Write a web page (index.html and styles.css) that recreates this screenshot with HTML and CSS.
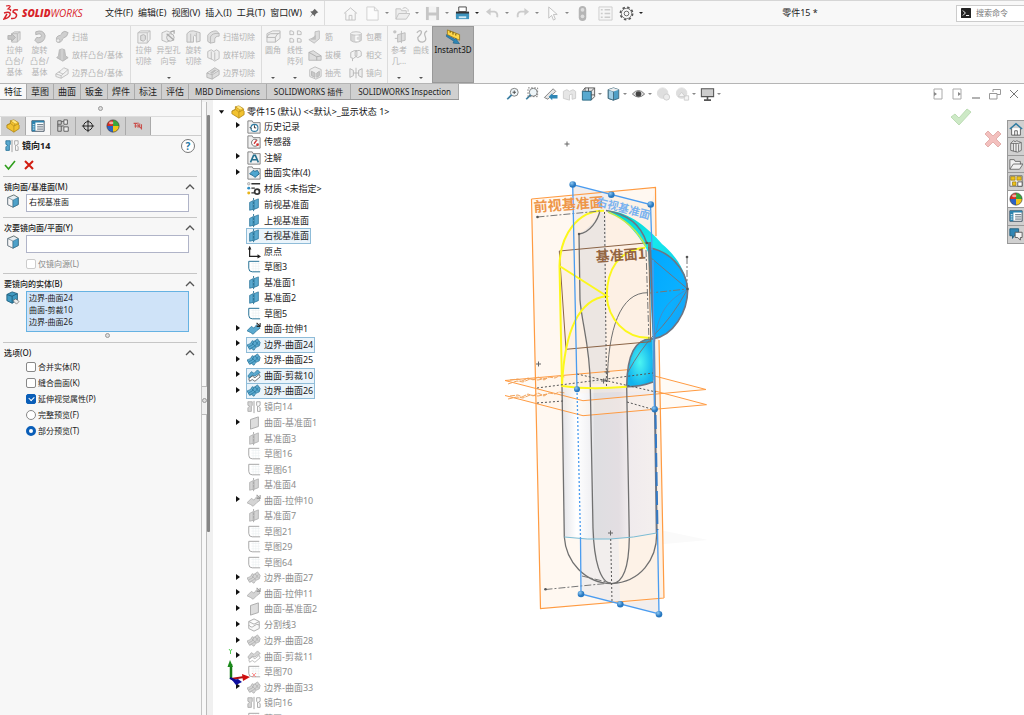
FILE: index.html
```html
<!DOCTYPE html>
<html lang="zh-CN">
<head>
<meta charset="utf-8">
<title>SOLIDWORKS - 零件15</title>
<link rel="stylesheet" href="styles.css">
</head>
<body>
<svg class="defs" aria-hidden="true">
  <defs>
    <linearGradient id="gBody" x1="0" x2="1" y1="0" y2="0"><stop offset="0" stop-color="#e4e4e8"/><stop offset=".15" stop-color="#fff"/><stop offset=".3" stop-color="#f1f1f4"/><stop offset=".34" stop-color="#dedee1"/><stop offset=".6" stop-color="#e3dee2"/><stop offset=".7" stop-color="#f0ebed"/><stop offset="1" stop-color="#f4efee"/></linearGradient>
    <linearGradient id="gBlue" x1="0" x2="1" y1="0" y2="1"><stop offset="0" stop-color="#00a8ff"/><stop offset=".6" stop-color="#0ab0ff"/><stop offset="1" stop-color="#1e9cf0"/></linearGradient>
    <linearGradient id="gTeal" x1="0" x2="1" y1="0" y2="1"><stop offset="0" stop-color="#00cfc8"/><stop offset=".5" stop-color="#16e8ec"/><stop offset="1" stop-color="#08c4e8"/></linearGradient>
    <radialGradient id="gFin"><stop offset="0" stop-color="#4cf5f2"/><stop offset="1" stop-color="#12b4ee"/></radialGradient>
    <radialGradient id="gDot" cx=".35" cy=".3"><stop offset="0" stop-color="#8cc8f4"/><stop offset="1" stop-color="#2878c0"/></radialGradient>
  </defs>
  <symbol id="part" viewBox="0 0 16 16"><path d="M1 7l4-2V2l4-1 5 3v2l1 1v4l-6 4-8-5z" fill="#f2c230" stroke="#a67c10" stroke-width=".8"/><path d="M1 7l4-2 4 3v7M9 8l6-3M5 2l5 3v3" fill="none" stroke="#b58a18" stroke-width=".8"/><path d="M6 2l3-1 4 3-3 1z" fill="#ffe681"/></symbol>
  <symbol id="plane" viewBox="0 0 16 16"><path d="M3 5l4-2v10l-4 1zM8 3l5-2v10l-5 2z" fill="var(--a)" stroke="var(--b)" stroke-width=".8"/><path d="M7.500 0v16" stroke="var(--b)" stroke-dasharray="3 1"/></symbol>
  <symbol id="plane2" viewBox="0 0 16 16"><path d="M4 4l9-3v11l-9 3z" fill="#ddd" stroke="#a5a5a5"/></symbol>
  <symbol id="sketch" viewBox="0 0 16 16"><path d="M5 4h10M5 7h10M5 10h10M7 2v11M10 2v11M13 2v11" stroke="#e8edef" stroke-width=".6"/><path d="M14 1.500H2v8q0 4 4 4h9" fill="none" stroke="var(--b)" stroke-width="1.100"/></symbol>
  <symbol id="surf" viewBox="0 0 16 16"><path d="M0 8q5-1 6-5l2 1 4-3 3 4-1 4q-5 1-6 5l-3-2-2 1z" fill="var(--a)" stroke="var(--b)" stroke-width=".8"/><path d="M2 10q5-1 6-6M4 12q6-2 9-8M5 5l5 5M9 3l4 5" fill="none" stroke="var(--b)" stroke-width=".7"/></symbol>
  <symbol id="extr" viewBox="0 0 16 16"><path d="M0 10l5-5 3 2 3-4 4 4-4 3-4 4-3-2z" fill="var(--a)" stroke="var(--b)" stroke-width=".8"/><path d="M11 1l4 4M15 1v4h-4" fill="none" stroke="var(--d)" stroke-width="1.200"/></symbol>
  <symbol id="trim" viewBox="0 0 16 16"><path d="M1 8l4-5 3 2 4-4 3 3-6 4-3-1-3 4z" fill="var(--a)" stroke="var(--b)" stroke-width=".8"/><path d="M2 11l4-3 3 2 5-4 1 3-6 5-3-2-3 2z" fill="#fff" stroke="var(--d)" stroke-width=".7"/></symbol>
  <symbol id="mirror" viewBox="0 0 16 16"><path d="M1 2h5v4L5 7v6H1V9l2-2-2-1z" fill="var(--a)" stroke="var(--b)" stroke-width=".9"/><path d="M8 1v14" stroke="#999"/><path d="M15 2h-4v4l1 1v6h3V9l-2-2 2-1z" fill="#fafafa" stroke="#999" stroke-width=".9"/></symbol>
  <symbol id="split" viewBox="0 0 16 16"><path d="M2 4l6-3 6 3v8l-6 3-6-3zM2 4l6 3 6-3M2 8q3 4 6 1t6-1" fill="#f8f8f8" stroke="#a5a5a5"/></symbol>
  <symbol id="fold" viewBox="0 0 16 16"><path d="M1 15V1h5l1 2h8v12z" fill="#f1f1f1" stroke="#777"/></symbol>
  <symbol id="hist" viewBox="0 0 16 16"><use href="#fold"/><circle cx="8.500" cy="9" r="4" fill="#fff" stroke="#2f7ca3" stroke-width="1.200"/><path d="M8.500 6v3h2M3 8l2 2" fill="none" stroke="#222"/></symbol>
  <symbol id="sens" viewBox="0 0 16 16"><use href="#fold"/><path d="M12 6a4 4 0 1 0 1 4" fill="#fff" stroke="#666"/><path d="M8 10l3-4" stroke="#c33" stroke-width="1.500"/><circle cx="12" cy="11" r="1.500" fill="#d33"/></symbol>
  <symbol id="note" viewBox="0 0 16 16"><use href="#fold"/><path d="M4 13L7.500 5h2L13 13M6 10h5" fill="none" stroke="#24708f" stroke-width="1.800"/></symbol>
  <symbol id="bodies" viewBox="0 0 16 16"><use href="#fold"/><path d="M3 9l4-4 2 1 3-1 2 4-5 4-2-2z" fill="#4ea6d0" stroke="#1d6488"/></symbol>
  <symbol id="mat" viewBox="0 0 16 16"><circle cx="2" cy="2" r="1.500" fill="#ddd" stroke="#777" stroke-width=".5"/><circle cx="2" cy="7" r="1.700" fill="#2f8fc4"/><circle cx="2" cy="12.500" r="1.700" fill="#e8b41c"/><path d="M5 2h10M5 7h4M5 12.500h3" stroke="#333" stroke-width="1.500"/><circle cx="11.500" cy="11" r="2.800" fill="#fff" stroke="#333" stroke-width="2"/></symbol>
  <symbol id="orig" viewBox="0 0 16 16"><path d="M3 2v11h10" fill="none" stroke="#222" stroke-width="1.400"/><path d="M1 5l2-4 2 4zM12 10.500l4 2.500-4 2.500z" fill="#222"/></symbol>
  <symbol id="cube" viewBox="0 0 16 16"><path d="M2 4l7-3 5 3v8l-6 3-6-3z" fill="#e7eef2" stroke="#566"/><path d="M2 4l6 3v8l-6-3z" fill="#f5f5f5" stroke="#567" stroke-width=".7"/><path d="M8 7l6-3v8l-6 3z" fill="#4ea1c9" stroke="#2b6d8f" stroke-width=".7"/></symbol>
  <symbol id="cube2" viewBox="0 0 16 16"><path d="M1 4l6-3 6 2v7l-6 4-6-3z" fill="#3f9ac2" stroke="#1d5b7b"/><path d="M1 4l6 2 6-3M7 6v8" fill="none" stroke="#1d5b7b"/><path d="M8 11l3-2 4 3-3 3z" fill="#eee" stroke="#555" stroke-width=".7"/></symbol>
  <symbol id="ball" viewBox="0 0 16 16"><path d="M8 8V1a7 7 0 0 0-7 7z" fill="#d92d20"/><path d="M8 8V1a7 7 0 0 1 7 7z" fill="#3aa63a"/><path d="M8 8h7a7 7 0 0 1-7 7z" fill="#f0c419"/><path d="M8 8H1a7 7 0 0 0 7 7z" fill="#2b62c4"/><circle cx="8" cy="8" r="7" fill="none" stroke="#333" stroke-width=".7"/><ellipse cx="6" cy="4.500" rx="2.500" ry="1.600" fill="#fff" opacity=".6"/></symbol>
  <symbol id="props" viewBox="0 0 16 16"><path d="M1 2h14v12H1z" fill="#fff" stroke="#345"/><path d="M1 2h14v2H1zM1 4h4v10H1z" fill="#2d83ae"/><path d="M7 6.500h7M7 9h7M7 11.500h7" stroke="#456"/><path d="M2 6.500h2M2 9h2M2 11.500h2" stroke="#fff"/></symbol>
  <symbol id="chev" viewBox="0 0 10 6"><path d="M1 5l4-4 4 4" fill="none" stroke="#555" stroke-width="1.300"/></symbol>
  <symbol id="caret" viewBox="0 0 4 4"><path d="M0 1h4L2 3z" fill="currentColor"/></symbol>
  <symbol id="boss" viewBox="0 0 16 16"><path d="M5 5l3-2h6v8l-3 3H5z" fill="#ddd" stroke="#c0c0c0"/><path d="M5 5h6v9M11 5l3-2" fill="none" stroke="#bbb"/><path d="M1 7h4V5l4 4-4 4v-2H1z" fill="#c4c4c4" stroke="#b2b2b2"/></symbol>
  <symbol id="rev" viewBox="0 0 16 16"><path d="M4 3q8-3 10 4 0 7-8 8l-3-3 2-3q5 1 5-2T4 6z" fill="#cfcfcf" stroke="#b2b2b2"/></symbol>
  <symbol id="sweep" viewBox="0 0 16 16"><path d="M2 13q-2-6 4-7 2-1 2-3 3-3 7 0-1 5-5 6-2 1-2 3-3 4-6 1z" fill="#cfcfcf" stroke="#b2b2b2"/><circle cx="3.500" cy="12" r="2" fill="#eee" stroke="#bbb"/></symbol>
  <symbol id="loft" viewBox="0 0 16 16"><path d="M5 2l3-1 3 1 1 7 3 2-6 4-7-4 2-2z" fill="#c4c4c4" stroke="#b5b5b5"/><path d="M8 1v13" stroke="#ddd"/></symbol>
  <symbol id="bound" viewBox="0 0 16 16"><path d="M1 9l6-4 3-3 5 2v5l-8 5-6-2zM1 9l6 2 8-7M7 11v3M4 7l5 2" fill="#f0f0f0" stroke="#bcbcbc"/></symbol>
  <symbol id="bcut" viewBox="0 0 16 16"><path d="M1 8l9-6 5 3v5l-8 5-6-2zM1 8l6 2 8-5M7 10v5" fill="#ddd" stroke="#b2b2b2"/><path d="M4 8l6-4 2 1-5 4z" fill="#bcbcbc"/></symbol>
  <symbol id="cut" viewBox="0 0 16 16"><path d="M2 4l3-2h10v9l-3 4H2z" fill="#eee" stroke="#bcbcbc"/><path d="M2 4h10v11M12 4l3-2" fill="none" stroke="#c0c0c0"/><path d="M5 7l3-1 2 1v4l-2 2-3-1z" fill="#ddd" stroke="#b2b2b2"/></symbol>
  <symbol id="lcut" viewBox="0 0 16 16"><path d="M2 4l4-2 3 2 3-2 3 2v8l-5 3-3-2-5-2zM6 4v9M10 5v9" fill="#eee" stroke="#b8b8b8"/></symbol>
  <symbol id="shell" viewBox="0 0 16 16"><path d="M2 4l6-3 7 3v8l-6 3-7-3z" fill="#eee" stroke="#b8b8b8"/><path d="M4 6l4 2v5l-4-2zM10 8l3-2v5l-3 2z" fill="#c8c8c8" stroke="#b5b5b5"/></symbol>
  <symbol id="hole" viewBox="0 0 16 16"><path d="M1 4l5-2 5 2v8l-5 2-5-2z" fill="#eee" stroke="#bcbcbc"/><circle cx="10" cy="9" r="4" fill="#e9e9e9" stroke="#b0b0b0"/><path d="M6 5l8 7M10 3l4-1v3" fill="none" stroke="#aaa" stroke-width="1.300"/></symbol>
  <symbol id="rcut" viewBox="0 0 16 16"><path d="M1 5q3-4 7-3t7 2v9l-4 1V8q-2-3-3 0v6H1z" fill="#e4e4e4" stroke="#b8b8b8"/><path d="M5 5v9M11 4v4" fill="none" stroke="#bbb"/></symbol>
  <symbol id="scut" viewBox="0 0 16 16"><path d="M2 6q3-5 10-5l3 3v3q-5 0-5 4v3l-5 1-3-2z" fill="#e0e0e0" stroke="#b5b5b5"/><path d="M5 15V8q2-5 10-4" fill="none" stroke="#b5b5b5"/></symbol>
  <symbol id="fillet" viewBox="0 0 16 16"><path d="M1 5l6-3h8v8l-5 4H1z" fill="#efefef" stroke="#bbb"/><path d="M1 9q1-4 4-4h8M1 9h9q1-4 5-5M10 9v5" fill="none" stroke="#b5b5b5"/></symbol>
  <symbol id="patt" viewBox="0 0 16 16"><path d="M2 2h2l2 1v3H2zM10 2h2l2 1v3h-4zM2 10h2l2 1v3H2zM10 10h2l2 1v3h-4z" fill="#f2f2f2" stroke="#bcbcbc"/></symbol>
  <symbol id="rib" viewBox="0 0 16 16"><path d="M1 11l7-3V2l5-1v9l-6 5z" fill="#ddd" stroke="#bbb"/><path d="M3 11l6-6v6z" fill="#c0c0c0"/></symbol>
  <symbol id="draft" viewBox="0 0 16 16"><path d="M1 5l5-2 9 6v5H1z" fill="#ddd" stroke="#b5b5b5"/><path d="M1 5l9 5v4M10 10l5-1" fill="none" stroke="#aaa"/></symbol>
  <symbol id="wrap" viewBox="0 0 16 16"><path d="M2 4v8q6 4 12 0V4" fill="#d8d8d8" stroke="#bbb"/><ellipse cx="8" cy="4" rx="6" ry="2" fill="#f3f3f3" stroke="#bbb"/><path d="M11 7H8v5h3" fill="none" stroke="#fff" stroke-width="1.500"/></symbol>
  <symbol id="inter" viewBox="0 0 16 16"><path d="M2 11V5l4-2h3v6l-4 3zM7 9V4q6-3 7 1v4l-4 2zM4 12v3" fill="#f3f3f3" stroke="#b5b5b5"/></symbol>
  <symbol id="mir" viewBox="0 0 16 16"><path d="M1 3l4 2v6l-4 2zM15 3l-4 2v6l4 2zM8 2v12M5 8h6" fill="#eee" stroke="#b5b5b5"/></symbol>
  <symbol id="geo" viewBox="0 0 16 16"><circle cx="3" cy="3" r="1.800" fill="#c5c5c5"/><path d="M6 6l8-2v8l-8 2zM3 10h3M10 2v13" fill="#ddd" stroke="#bbb"/></symbol>
  <symbol id="curve" viewBox="0 0 16 16"><path d="M3 4q4-4 5-1 0 3-4 6 0 5 5 5 5-1 3-6-2-4 2-6" fill="none" stroke="#b9b9b9" stroke-width="1.300"/></symbol>
  <symbol id="lens" viewBox="0 0 16 16"><circle cx="10" cy="6" r="4.500" fill="#eef5f8" stroke="#777"/><path d="M7 9l-5 5" stroke="#3b7fa3" stroke-width="2"/></symbol>
</svg>

<header class="titlebar">
  <div class="brand">
    <svg viewBox="0 0 16 16" class="ds"><path d="M3 1q5-1 4 1L5 4q4 0 2 2" fill="none" stroke="#d8232a" stroke-width="1.200"/><path d="M1 8q7-2 6 2-1 3-6 4l3-5M15 5q-5-1-5 2 5 2 3 5-1 2-5 1.500" fill="none" stroke="#d8232a" stroke-width="1.500"/></svg>
    <span class="wordmark"><b>SOLID</b>WORKS</span>
  </div>
  <nav class="menu">
    <a href="#">文件(F)</a><a href="#">编辑(E)</a><a href="#">视图(V)</a><a href="#">插入(I)</a><a href="#">工具(T)</a><a href="#">窗口(W)</a>
    <button aria-label="固定"><svg viewBox="0 0 16 16" class="i10"><path d="M9 1l6 6-2 .5-3 3-.5 3L6 10l-5 5 4-6-3-3.500 3.500-.5 3-3z" fill="#666"/></svg></button>
  </nav>
  <div class="quick">
    <button aria-label="主页" class="home"><svg viewBox="0 0 16 16"><path d="M1 8l7-6 7 6M3 7v8h10V7M6.500 15v-5h3v5" fill="none" stroke="#c2c2c2"/></svg></button>
    <button aria-label="新建"><svg viewBox="0 0 16 16"><path d="M2 1h8l4 4v10H2zM10 1v4h4" fill="#fcfcfc" stroke="#cfcfcf"/></svg></button><svg class="car"><use href="#caret"/></svg>
    <button aria-label="打开"><svg viewBox="0 0 16 16"><path d="M1 14V3h5l1 2h5v3h4l-4 6zM1 14l3-6h8" fill="#ededed" stroke="#c2c2c2"/><path d="M8 3q3-3 6 1v2" fill="none" stroke="#c2c2c2"/></svg></button><svg class="car"><use href="#caret"/></svg>
    <button aria-label="保存"><svg viewBox="0 0 16 16"><path d="M1 1h14v14H1z" fill="#c6c6c6"/><path d="M4 1h8v6H4zM4 10h8v5H4z" fill="#f3f3f3"/></svg></button><svg class="car"><use href="#caret"/></svg>
    <button aria-label="打印"><svg viewBox="0 0 16 16"><path d="M4 1h8v5H4z" fill="#fff" stroke="#444"/><path d="M1 6h14v6H1z" fill="#333"/><path d="M1 8h14v6H1z" fill="#3c93bd"/><path d="M4 11h8v2H4z" fill="#cfe8f4"/></svg></button><svg class="car dark"><use href="#caret"/></svg>
    <button aria-label="撤消"><svg viewBox="0 0 16 16"><path d="M3 6h7q4 1 3 6" fill="none" stroke="#ccc" stroke-width="2"/><path d="M6 2v8L1 6z" fill="#ccc"/></svg></button><svg class="car"><use href="#caret"/></svg>
    <button aria-label="重做"><svg viewBox="0 0 16 16"><path d="M13 6H6q-4 1-3 6" fill="none" stroke="#ccc" stroke-width="2"/><path d="M10 2v8l5-4z" fill="#ccc"/></svg></button><svg class="car"><use href="#caret"/></svg>
    <button aria-label="选择"><svg viewBox="0 0 16 16"><path d="M4 1v12l3-3 2 5 2-1-2-5h4z" fill="#fcfcfc" stroke="#c0c0c0"/></svg></button><svg class="car"><use href="#caret"/></svg>
    <button aria-label="重建"><svg viewBox="0 0 16 16"><rect x="4" y="0" width="8" height="16" rx="4" fill="#b5b5b5"/><circle cx="8" cy="4" r="2" fill="#ddd"/><circle cx="8" cy="11" r="2" fill="#ddd"/></svg></button>
    <button aria-label="属性" class="gap"><svg viewBox="0 0 16 16"><path d="M1 1h14v14H1z" fill="#f6f6f6" stroke="#ccc"/><path d="M3 4h2M3 8h2M3 12h2M7 4h6M7 8h6M7 12h6" stroke="#ccc" stroke-width="1.500"/></svg></button>
    <button aria-label="选项"><svg viewBox="0 0 16 16"><circle cx="8" cy="8" r="6.500" fill="none" stroke="#555" stroke-width="1.800" stroke-dasharray="2.600 2.500"/><circle cx="8" cy="8" r="5.500" fill="#f7f7f7" stroke="#555" stroke-width=".8"/><circle cx="8" cy="8" r="2.500" fill="none" stroke="#555" stroke-width=".9"/></svg></button><svg class="car dark"><use href="#caret"/></svg>
  </div>
  <h1 class="doc">零件15 *</h1>
  <div class="search"><svg viewBox="0 0 16 16" class="i10"><rect width="16" height="16" rx="1" fill="#222"/><path d="M3 4l4 4-4 4M8 12h5" fill="none" stroke="#fff" stroke-width="1.500"/></svg><input aria-label="搜索命令" placeholder="搜索命令"></div>
</header>

<section class="ribbon">
  <div class="group g1">
    <button class="big"><svg><use href="#boss"/></svg><span>拉伸<br>凸台/<br>基体</span></button>
    <button class="big"><svg><use href="#rev"/></svg><span>旋转<br>凸台/<br>基体</span></button>
    <div class="stack">
      <button><svg><use href="#sweep"/></svg>扫描</button>
      <button><svg><use href="#loft"/></svg>放样凸台/基体</button>
      <button><svg><use href="#bound"/></svg>边界凸台/基体</button>
    </div>
  </div>
  <div class="group g2">
    <button class="big"><svg><use href="#cut"/></svg><span>拉伸<br>切除</span></button>
    <button class="big"><svg><use href="#hole"/></svg><span>异型孔<br>向导</span><svg class="car"><use href="#caret"/></svg></button>
    <button class="big"><svg><use href="#rcut"/></svg><span>旋转<br>切除</span></button>
    <div class="stack">
      <button><svg><use href="#scut"/></svg>扫描切除</button>
      <button><svg><use href="#lcut"/></svg>放样切除</button>
      <button><svg><use href="#bcut"/></svg>边界切除</button>
    </div>
  </div>
  <div class="group g3">
    <button class="big"><svg><use href="#fillet"/></svg><span>圆角</span><svg class="car"><use href="#caret"/></svg></button>
    <button class="big"><svg><use href="#patt"/></svg><span>线性<br>阵列</span><svg class="car"><use href="#caret"/></svg></button>
    <div class="stack">
      <button><svg><use href="#rib"/></svg>筋</button>
      <button><svg><use href="#draft"/></svg>拔模</button>
      <button><svg><use href="#shell"/></svg>抽壳</button>
    </div>
    <div class="stack">
      <button><svg><use href="#wrap"/></svg>包覆</button>
      <button><svg><use href="#inter"/></svg>相交</button>
      <button><svg><use href="#mir"/></svg>镜向</button>
    </div>
  </div>
  <div class="group g4">
    <button class="big"><svg><use href="#geo"/></svg><span>参考<br>几...</span><svg class="car"><use href="#caret"/></svg></button>
    <button class="big"><svg><use href="#curve"/></svg><span>曲线</span><svg class="car"><use href="#caret"/></svg></button>
  </div>
  <button class="instant"><svg viewBox="0 0 16 16"><path d="M2 1l13 5v6L2 6z" fill="#ffd84a" stroke="#96700a" stroke-width=".8"/><path d="M5 2v2M8 3v3M11 5v2" stroke="#6b5008"/><path d="M1 6l9 5 1-1 4 6-7-1 1-2-8-5z" fill="#2f86b5" stroke="#175a80" stroke-width=".6"/></svg>Instant3D</button>
</section>

<div class="tabrow">
  <nav class="tabs">
    <a href="#" class="on">特征</a><a href="#">草图</a><a href="#">曲面</a><a href="#">钣金</a><a href="#">焊件</a><a href="#">标注</a><a href="#">评估</a><a href="#" class="lat">MBD Dimensions</a><a href="#" class="lat">SOLIDWORKS 插件</a><a href="#" class="lat">SOLIDWORKS Inspection</a>
  </nav>
  <div class="headsup">
    <button aria-label="整屏显示"><svg viewBox="0 0 16 16"><use href="#lens"/><path d="M10 4v4M8 6h4" stroke="#444"/></svg></button>
    <button aria-label="局部放大"><svg viewBox="0 0 16 16"><use href="#lens"/><path d="M4 1h11v10H4z" fill="none" stroke="#777" stroke-dasharray="2 1.500"/></svg></button>
    <button aria-label="上一视图"><svg viewBox="0 0 16 16"><path d="M1 12l10-10 3 3-9 9z" fill="#e5e5e5" stroke="#777"/><path d="M6 11l4-4v2h6v4h-6v2z" fill="#2f86b5"/></svg></button>
    <button aria-label="剖面视图"><svg viewBox="0 0 16 16"><path d="M1 5l4-2 3 2 4-2 3 2v8l-4 1V8L8 9v6l-7-2z" fill="#e6e6e6" stroke="#ccc"/></svg></button>
    <button aria-label="视图定向"><svg viewBox="0 0 16 16"><path d="M4 1h11v10l-4 4V5H4zM4 1L1 5" fill="#e7e7e7" stroke="#555"/><path d="M1 5h10v10H1z" fill="#58a9cf" stroke="#25637f"/><path d="M11 5l4-4M8 1v4M11 9h4" stroke="#555"/></svg></button><svg class="car"><use href="#caret"/></svg>
    <button aria-label="显示样式"><svg viewBox="0 0 16 16"><path d="M2 3l6-2 6 2v10l-6 2-6-2z" fill="#4f9fc6" stroke="#3d6577"/><path d="M2 3l6 2v10l-6-2z" fill="#9fcde4" stroke="#3d6577"/><path d="M2 3l6-2 6 2-6 2z" fill="#eee"/></svg></button><svg class="car"><use href="#caret"/></svg>
    <button aria-label="隐藏显示"><svg viewBox="0 0 16 16"><path d="M1 8q7-8 14 0-7 7-14 0z" fill="#ddd" stroke="#777" stroke-width="1.100"/><circle cx="8" cy="8" r="3.200" fill="#444"/></svg></button><svg class="car"><use href="#caret"/></svg>
    <button aria-label="编辑外观"><svg viewBox="0 0 16 16"><circle cx="7" cy="7" r="6" fill="#dedede" stroke="#ddd"/><circle cx="11.500" cy="11.500" r="3.500" fill="#ececec" stroke="#ccc"/></svg></button>
    <button aria-label="应用布景"><svg viewBox="0 0 16 16"><circle cx="7" cy="7" r="6" fill="#dedede" stroke="#ddd"/><path d="M3 11l4-5 4 5zM10 10h5v5h-5z" fill="#f4f4f4" stroke="#ccc"/></svg></button><svg class="car"><use href="#caret"/></svg>
    <button aria-label="视图设置"><svg viewBox="0 0 16 16"><path d="M1 2h14v9H1z" fill="#ccc" stroke="#555" stroke-width="1.200"/><path d="M8 11v3M4 15h8" stroke="#555" stroke-width="1.800"/></svg></button><svg class="car"><use href="#caret"/></svg>
  </div>
  <div class="wins">
    <button aria-label="左"><svg viewBox="0 0 12 12"><path d="M2 1h8v10H2z" fill="none" stroke="#aaa"/><path d="M2 4l3 2-3 2z" fill="#888"/></svg></button>
    <button aria-label="右"><svg viewBox="0 0 12 12"><path d="M2 1h8v10H2z" fill="none" stroke="#aaa"/><path d="M7 4l3 2-3 2z" fill="#888"/></svg></button>
    <button aria-label="最小化"><svg viewBox="0 0 12 12"><path d="M2 10h8" stroke="#999" stroke-width="1.500"/></svg></button>
    <button aria-label="还原"><svg viewBox="0 0 12 12"><path d="M4 4V1.500h7.500v5H8M.5 5.500H8V11H.5z" fill="none" stroke="#999"/></svg></button>
    <button aria-label="关闭"><svg viewBox="0 0 12 12"><path d="M2 2l8 8M10 2l-8 8" stroke="#777"/></svg></button>
  </div>
</div>

<main class="work">
  <aside class="panel">
    <div class="grip"><i class="knob"></i></div>
    <div class="ptabs">
      <button aria-label="设计树"><svg><use href="#part"/></svg></button>
      <button aria-label="属性管理器" class="on"><svg><use href="#props"/></svg></button>
      <button aria-label="配置"><svg viewBox="0 0 16 16"><path d="M2 2v12M2 2h4v4H2M6 8h3M6 3h3M2 14h4V8H2" fill="none" stroke="#555"/><path d="M9 1h4v5H9zM9 9h5v5H9z" fill="#eee" stroke="#555"/></svg></button>
      <button aria-label="尺寸专家"><svg viewBox="0 0 16 16"><circle cx="8" cy="8" r="5" fill="none" stroke="#222" stroke-width="1.100"/><path d="M8 1v14M1 8h14" stroke="#222" stroke-width="1.100"/></svg></button>
      <button aria-label="外观"><svg><use href="#ball"/></svg></button>
      <button aria-label="插件"><svg viewBox="0 0 16 16"><path d="M3 5h4M5 5v5M4 8h3M8 4v6M10 5v5M8 7l4 4M12 6v6" fill="none" stroke="#c9504c" stroke-width="1.200"/></svg></button>
    </div>
    <div class="phead"><svg class="i14"><use href="#mirror"/></svg><h2>镜向14</h2><button class="help" aria-label="帮助">?</button></div>
    <div class="pact">
      <button aria-label="确定"><svg viewBox="0 0 12 12"><path d="M1 6l3.500 4L11 2" fill="none" stroke="#2f9e1c" stroke-width="1.600"/></svg></button>
      <button aria-label="取消"><svg viewBox="0 0 12 12"><path d="M2 2l8 8M10 2l-8 8" stroke="#d21c10" stroke-width="2"/></svg></button>
    </div>
    <section class="sec">
      <h3><label for="f1">镜向面/基准面(M)</label><svg class="chev"><use href="#chev"/></svg></h3>
      <div class="frow"><svg class="i14"><use href="#cube"/></svg><input id="f1" value="右视基准面"></div>
    </section>
    <section class="sec s2">
      <h3><label for="f2">次要镜向面/平面(Y)</label><svg class="chev"><use href="#chev"/></svg></h3>
      <div class="frow"><svg class="i14"><use href="#cube"/></svg><input id="f2"></div>
      <label class="opt dis"><input type="checkbox" disabled>仅镜向源(L)</label>
    </section>
    <section class="sec s3">
      <h3><span>要镜向的实体(B)</span><svg class="chev"><use href="#chev"/></svg></h3>
      <div class="frow"><svg class="i14"><use href="#cube2"/></svg><ul class="list"><li>边界-曲面24</li><li>曲面-剪裁10</li><li>边界-曲面26</li></ul></div>
      <div class="grip2"><i class="knob"></i></div>
    </section>
    <section class="sec s4">
      <h3><span>选项(O)</span><svg class="chev"><use href="#chev"/></svg></h3>
      <label class="opt"><input type="checkbox">合并实体(R)</label>
      <label class="opt"><input type="checkbox">缝合曲面(K)</label>
      <label class="opt"><input type="checkbox" checked>延伸视觉属性(P)</label>
      <label class="opt"><input type="radio" name="pv">完整预览(F)</label>
      <label class="opt"><input type="radio" name="pv" checked>部分预览(T)</label>
    </section>
  </aside>
  <div class="splitter"><div class="rail"><span></span><i class="knob"></i><span></span></div><div class="thumb"></div></div>

  <div class="viewport">
    <svg class="model" viewBox="500 130 215 495">
      <path d="M660 530L708 540L610 549z" fill="#fafafa"/>
      <path d="M531.500 199L655.500 187.500L664 598L540.500 608.500z" fill="#fff8f1"/>
      <path d="M572.700 184.500L650.500 204.500L659 614L581 594z" fill="#f2eeed"/>
      <path d="M611 195L650.500 204.500L655.500 190L664 598L620 604z" fill="#fdf2e7"/>
      <path d="M562 386L559.500 266C560 235 578 210 604 210.700C635 212 650 240 653 270L653 386z" fill="#fdf0e4"/>
      <path d="M579 234Q596 224 600 211L606 215V384H590Q590 340 580 310z" fill="#ece6e2"/>
      <path d="M562.500 388Q595 391 653 383L656.700 533Q610 543 564.300 537z" fill="url(#gBody)"/>
      <path d="M505 380.500L630 369.500L706 389.500L583 400.700zM505 395.500L583 415.700L706.500 404.700L655 391" fill="#fff3e6" fill-opacity=".35" stroke="#ff9b42"/>
      <path d="M510 380l8-1 4 2 6-3 5 2 5-3 6 3 5-3 6 1 4-2 6 1M508 384l9-3 6 1 7-3 8 1 9-2M510 396l8-1 4 2 6-3 5 2 5-3 6 3 5-3 6 1 4-2 6 1M508 399l9-2 6 1 7-3 8 1 9-2" fill="none" stroke="#f1a35c" stroke-dasharray="5 1"/>
      <path d="M606 210.500C630 211 650 230 662 244C676 256 686 270 687.700 289L653 262L646 248C635 230 622 216 606 210.500z" fill="url(#gTeal)"/>
      <path d="M648 247.700C668 250 686 268 687.700 289C688 312 673 336 652.700 339z" fill="url(#gBlue)"/>
      <path d="M652.700 338C635 338 627 355 626.700 386.700Q640 387 653 382z" fill="url(#gFin)"/>
      <g fill="none" stroke="#6e7582" stroke-width="1.600">
        <path d="M606 210.500C628 214 641 225 646.700 243M648 247.700C668 250 686 268 687.700 289C688 312 673 336 652.700 339C635 338 627 355 626.700 386.700Q640 387 653 382"/>
        <path d="M650.500 257.500L687.700 289Q672 318 653 336Q640 350 628 372" stroke-width="1"/>
        <path d="M653 380C653 320 660 305 687.700 289" stroke="#4c86c0" stroke-width=".8"/>
        <path d="M650 242L654 339L656.700 533" stroke-width="2"/>
      </g>
      <g fill="none" stroke="#707070" stroke-width="1.300">
        <path d="M600 210.700C598 220 590 233 579 234L580 300C582 325 590 345 590.300 386L593 528C594 560 600 583 611.700 583.700"/>
        <path d="M626.700 387L629.300 537.700C629 562 625 583 611.700 583.700C640 582 657 560 656.700 533"/>
        <path d="M562 386L564.300 537C566 562 585 583 611.700 583.700"/>
        <path d="M607.300 382C608 330 620 292 648 292.700" stroke-width="1"/>
      </g>
      <path d="M564.300 537Q610 543 656.700 533" fill="none" stroke="#7bbcd4"/>
      <path d="M559.300 251L648.700 242.700L650.700 341.700L566 349.300z" fill="none" stroke="#8b6446"/>
      <g fill="none" stroke="#fcf81b" stroke-width="2">
        <path d="M562 386L559.500 266C560 235 578 210 604 210.700"/>
        <path d="M559.500 266L606.700 296C575 300 564 340 562 386Q590 390 626.700 386.700"/>
        <path d="M606.700 296C607 270 618 250 645 247.700M606.700 296C608 318 625 339 650 337.700"/>
      </g>
      <path d="M608 212C628 220 640 235 646 247" fill="none" stroke="#bfe84c" stroke-width="1.500"/>
      <g fill="none" stroke="#555" stroke-dasharray="2 2">
        <path d="M604.500 212L606.500 386M610.700 539L612 602M537 388L653 373M577 374L656 392M537 403L563 401M627 402L655 410"/>
      </g>
      <path d="M537.500 217L600 211M545.500 589.500L611 583M687 257V289L650 293M646 250L649 341M582 576L611 583" fill="none" stroke="#777" stroke-dasharray="7 2 2 2"/>
      <path d="M531.500 199L655.500 187.500L656 236M664 598L540.500 608.500L531.500 199M664 598L659 340" fill="none" stroke="#ff9b42" stroke-width="1.200"/>
      <g fill="none" stroke="#4a9cf0" stroke-width="1.300">
        <path d="M577 389L572.700 184.500L650.500 204.500L652 250M580.500 538L581 594L659 614L657.500 530M653 260L654.500 409"/>
        <path d="M577 389L580.500 538" stroke-dasharray="2 2"/>
        <path d="M655.500 415L657.500 530" stroke="#3378c4" stroke-width="2" stroke-dasharray="14 5"/>
      </g>
      <g fill="url(#gDot)"><circle cx="572.700" cy="184.500" r="3.300"/><circle cx="611.300" cy="194.700" r="3.300"/><circle cx="650.700" cy="204.500" r="3.300"/><circle cx="577" cy="389.300" r="3"/><circle cx="654.700" cy="409.300" r="3.200"/><circle cx="581" cy="594" r="3.300"/><circle cx="620.300" cy="604.300" r="3.300"/><circle cx="659" cy="614.300" r="3.300"/></g>
      <g fill="#555"><circle cx="537.500" cy="217" r="1.300"/><circle cx="545.500" cy="589.300" r="1.300"/><circle cx="687" cy="257" r="1.300"/><circle cx="687.500" cy="289" r="1.300"/><circle cx="579" cy="234" r="1.200"/><circle cx="647" cy="243" r="1.200"/></g>
      <path d="M564.500 144h5M567 141.500v5M536 364h5M538.500 361.500v5M608 533h5M610.500 530.500v5M604.500 372h5M607 369.500v5M601 381h5M603.500 378.500v5" stroke="#666"/>
      <text class="lab" x="534" y="212" font-size="14" fill="#ee9648" transform="rotate(-4 534 212)">前视基准面</text>
      <text class="lab" x="596" y="205" font-size="11" fill="#7ab2f0" transform="rotate(15 596 205)">右视基准面</text>
      <text class="lab" x="596" y="262" font-size="14" fill="#946542" transform="rotate(-4 596 262)">基准面1</text>
    </svg>

    <div class="root"><button aria-label="折叠"><svg viewBox="0 0 8 6"><path d="M1 1h6L4 5z" fill="#111"/></svg></button><svg class="i14"><use href="#part"/></svg><span>零件15 (默认) &lt;&lt;默认&gt;_显示状态 1&gt;</span></div>
    <ul class="tree">
      <li class="x"><span><svg><use href="#hist"/></svg>历史记录</span></li>
      <li><span><svg><use href="#sens"/></svg>传感器</span></li>
      <li class="x"><span><svg><use href="#note"/></svg>注解</span></li>
      <li class="x"><span><svg><use href="#bodies"/></svg>曲面实体(4)</span></li>
      <li><span><svg><use href="#mat"/></svg>材质 &lt;未指定&gt;</span></li>
      <li><span><svg><use href="#plane"/></svg>前视基准面</span></li>
      <li><span><svg><use href="#plane"/></svg>上视基准面</span></li>
      <li class="sel"><span><svg><use href="#plane"/></svg>右视基准面</span></li>
      <li><span><svg><use href="#orig"/></svg>原点</span></li>
      <li><span><svg><use href="#sketch"/></svg>草图3</span></li>
      <li><span><svg><use href="#plane"/></svg>基准面1</span></li>
      <li><span><svg><use href="#plane"/></svg>基准面2</span></li>
      <li><span><svg><use href="#sketch"/></svg>草图5</span></li>
      <li class="x"><span><svg><use href="#extr"/></svg>曲面-拉伸1</span></li>
      <li class="x sel"><span><svg><use href="#surf"/></svg>边界-曲面24</span></li>
      <li class="x"><span><svg><use href="#surf"/></svg>边界-曲面25</span></li>
      <li class="x sel"><span><svg><use href="#trim"/></svg>曲面-剪裁10</span></li>
      <li class="x sel"><span><svg><use href="#surf"/></svg>边界-曲面26</span></li>
      <li class="off"><span><svg><use href="#mirror"/></svg>镜向14</span></li>
      <li class="x off"><span><svg><use href="#plane2"/></svg>曲面-基准面1</span></li>
      <li class="off"><span><svg><use href="#plane"/></svg>基准面3</span></li>
      <li class="off"><span><svg><use href="#sketch"/></svg>草图16</span></li>
      <li class="off"><span><svg><use href="#sketch"/></svg>草图61</span></li>
      <li class="off"><span><svg><use href="#plane"/></svg>基准面4</span></li>
      <li class="x off"><span><svg><use href="#extr"/></svg>曲面-拉伸10</span></li>
      <li class="off"><span><svg><use href="#plane"/></svg>基准面7</span></li>
      <li class="off"><span><svg><use href="#sketch"/></svg>草图21</span></li>
      <li class="off"><span><svg><use href="#sketch"/></svg>草图29</span></li>
      <li class="off"><span><svg><use href="#sketch"/></svg>草图64</span></li>
      <li class="x off"><span><svg><use href="#surf"/></svg>边界-曲面27</span></li>
      <li class="x off"><span><svg><use href="#extr"/></svg>曲面-拉伸11</span></li>
      <li class="x off"><span><svg><use href="#plane2"/></svg>曲面-基准面2</span></li>
      <li class="x off"><span><svg><use href="#split"/></svg>分割线3</span></li>
      <li class="x off"><span><svg><use href="#surf"/></svg>边界-曲面28</span></li>
      <li class="x off"><span><svg><use href="#trim"/></svg>曲面-剪裁11</span></li>
      <li class="off"><span><svg><use href="#sketch"/></svg>草图70</span></li>
      <li class="x off"><span><svg><use href="#surf"/></svg>边界-曲面33</span></li>
      <li class="off"><span><svg><use href="#mirror"/></svg>镜向16</span></li>
      <li class="off"><span><svg><use href="#sketch"/></svg>草图72</span></li>
    </ul>
    <svg class="triad" viewBox="224 646 36 44"><path d="M231 679V664" stroke="#157a15" stroke-width="2.500"/><path d="M227.500 667l2.500-7 3 7z" fill="#1a8a1a"/><path d="M231 679l13-2" stroke="#b01010" stroke-width="2"/><path d="M242 674l8 3-7 4z" fill="#d01010"/><path d="M230 678l8 4" stroke="#0a0a90" stroke-width="2"/><path d="M232 680l6-1 4 3-6 3z" fill="#1010a0"/><path d="M229 649l1.500 2 1.500-2M230.500 651v3" fill="none" stroke="#5c5"/><path d="M252 673l4 4M256 673l-4 4" stroke="#f77" stroke-width=".8"/></svg>
    <div class="confirm">
      <button aria-label="确认"><svg viewBox="0 0 22 18"><path d="M1 9l4-3 4 4 8-9 4 3L9 17z" fill="#cde9c6" stroke="#bcdcb4"/></svg></button>
      <button aria-label="取消" class="no"><svg viewBox="0 0 18 18"><path d="M4 1l5 5 5-5 3 3-5 5 5 5-3 3-5-5-5 5-3-3 5-5-5-5z" fill="#f3c0be" stroke="#e3b0ad"/></svg></button>
    </div>
    <nav class="task">
      <button aria-label="资源"><svg viewBox="0 0 16 16"><path d="M3 7v8h10V7" fill="#fff" stroke="#555"/><path d="M1 8l7-6 7 6" fill="none" stroke="#2f7ca3" stroke-width="1.800"/><path d="M6.500 15v-5h3v5" fill="none" stroke="#555"/></svg></button>
      <button aria-label="设计库"><svg viewBox="0 0 16 16"><path d="M2 5l3-3 2 1 2-1 2 1 3 1v9l-4 2-8-2zM5 5v9M8 5v10M11 6v8M2 5h9l3-1" fill="#eee" stroke="#666"/></svg></button>
      <button aria-label="文件"><svg viewBox="0 0 16 16"><path d="M1 14V3h5l1 2h6v3h3l-4 6zM1 14l4-6h9" fill="#f1f1f1" stroke="#666"/></svg></button>
      <button aria-label="视图"><svg viewBox="0 0 16 16"><path d="M1 2h14v12H1z" fill="#eee" stroke="#666"/><path d="M2 3h5v4H2zM9 3h5v4H9zM4 9h4v4H4z" fill="#f0c419" stroke="#8a6b00" stroke-width=".7"/><path d="M10 9h5v5h-5z" fill="#fff" stroke="#555"/></svg></button>
      <button aria-label="外观" class="on"><svg><use href="#ball"/></svg></button>
      <button aria-label="自定义属性"><svg><use href="#props"/></svg></button>
      <button aria-label="论坛"><svg viewBox="0 0 16 16"><path d="M1 2h10v8H6l-2 3v-3H1z" fill="#2f86b5" stroke="#1d5b7b"/><path d="M7 6h8v6h-2v3l-3-3H7z" fill="#f4f4f4" stroke="#555"/></svg></button>
    </nav>
  </div>
</main>
</body>
</html>
```
FILE: styles.css
```css
* { box-sizing: border-box; }
body { margin: 0; height: 100vh; display: flex; flex-direction: column; overflow: hidden; background: #fff; color: #222; font: 9px/12px "Noto Sans", "Noto Sans CJK SC", sans-serif; --a: #5aa9cf; --b: #1f6d93; --d: #222; }
button { border: 0; padding: 0; background: none; font: inherit; color: inherit; display: flex; align-items: center; justify-content: center; }
a { color: inherit; text-decoration: none; }
ul { list-style: none; margin: 0; padding: 0; }
h1, h2, h3 { margin: 0; font-size: 9px; line-height: 12px; font-weight: 400; }
svg { display: block; flex: none; }
.defs { position: absolute; width: 0; height: 0; }
.i10 { width: 10px; height: 10px; }
.i14 { width: 14px; height: 14px; }
.car { width: 4px; height: 4px; color: #888; }
.car.dark { color: #222; }

.titlebar { flex: none; height: 26px; display: flex; align-items: center; background: #f8f8f8; border-top: 1px solid #d6d6d6; border-bottom: 1px solid #e0e0e0; }
.brand { width: 105px; display: flex; align-items: center; gap: 3px; padding-left: 3px; color: #d8232a; }
.ds { width: 16px; height: 16px; }
.wordmark { font: italic 10px/12px "Open Sans", sans-serif; }
.wordmark b { font-weight: 800; }
.menu { width: 220px; height: 100%; display: flex; align-items: center; gap: 5px; border-right: 1px solid #ddd; white-space: nowrap; }
.menu button { margin-left: 2px; }
.quick { display: flex; align-items: center; gap: 5px; padding-left: 18px; }
.quick button svg { width: 15px; height: 15px; }
.quick .home { margin-right: 2px; }
.quick .gap { margin: 0 1px 0 3px; }
.quick .car { margin-right: 1px; }
.doc { flex: 1; text-align: center; }
.search { width: 68px; height: 17px; display: flex; align-items: center; gap: 5px; padding-left: 4px; background: #fff; border: 1px solid #ccc; border-right: 0; }
.search input { flex: 1; min-width: 0; border: 0; padding: 0; background: none; font: inherit; font-size: 8px; }
.search input::placeholder { color: #777; }

.ribbon { flex: none; height: 58px; display: flex; background: #f6f6f6; border-bottom: 1px solid #b5b5b5; color: #b4b4b4; font-size: 8px; line-height: 11px; }
.group { display: flex; padding-top: 3px; border-right: 1px solid #dcdcdc; }
.g1 { width: 131px; padding-left: 2px; }
.g2 { width: 131px; }
.g3 { width: 126px; }
.g4 { width: 44px; border-right: 0; }
.big { width: 25px; flex-direction: column; justify-content: flex-start; white-space: nowrap; text-align: center; }
.g3 .big, .g4 .big { width: 22px; }
.big > svg:first-child { width: 15px; height: 15px; }
.big .car { margin-top: auto; margin-bottom: 3px; color: #555; }
.stack { display: flex; flex-direction: column; justify-content: space-between; padding: 0 2px 3px; }
.g1 .stack { padding-left: 3px; }
.g2 .stack { padding-left: 0; }
.g3 .stack + .stack { padding-left: 5px; }
.stack button { gap: 3px; height: 15px; justify-content: flex-start; white-space: nowrap; }
.stack svg { width: 14px; height: 14px; }
.g3 .stack { width: 38px; }
.instant { width: 42px; flex-direction: column; justify-content: flex-start; padding-top: 2px; background: #b0b0b0; border: 1px solid #999; color: #111; }
.instant svg { width: 16px; height: 15px; }

.tabrow { flex: none; height: 16px; display: flex; align-items: flex-start; position: relative; z-index: 1; }
.tabs { display: flex; height: 16px; white-space: nowrap; border-bottom: 1px solid #999; }
.tabs a { padding: 0 4px; text-align: center; background: #d0d0d0; border-right: 1px solid #aaa; line-height: 15px; }
.tabs .lat { padding: 0 6px; font-size: 8px; }
.tabs .lat + .lat { padding: 0 7px; }
.tabs .on { background: #f8f8f8; }
.headsup { flex: 1; height: 20px; display: flex; align-items: center; gap: 4px; padding-left: 46px; }
.headsup button svg { width: 15px; height: 14px; }
.headsup .car { margin-left: -2px; }
.wins { height: 20px; display: flex; align-items: center; gap: 7px; padding-right: 4px; }
.wins svg { width: 12px; height: 12px; }

.work { flex: 1; min-height: 0; display: flex; }
.panel { width: 202px; background: #f7f7f7; border-right: 1px solid #c4c4c4; font-size: 8px; }
.grip { height: 17px; display: flex; align-items: center; justify-content: center; border-bottom: 1px solid #ddd; }
.knob { width: 5px; height: 5px; border: 1px solid #999; border-radius: 50%; background: #ddd; }
.ptabs { display: flex; height: 19px; border-bottom: 1px solid #ccc; padding-left: 1px; }
.ptabs button { width: 25px; background: #d0d0d0; border-right: 1px solid #aaa; }
.ptabs .on { background: #f7f7f7; }
.ptabs svg { width: 14px; height: 14px; }
.phead { display: flex; align-items: center; gap: 3px; height: 20px; padding: 0 6px 0 5px; }
.phead h2 { flex: 1; font-weight: 700; }
.help { width: 14px; height: 14px; border: 1px solid #777; border-radius: 50%; background: #fff; color: #2676a3; font-weight: 700; font-size: 10px; }
.pact { display: flex; gap: 7px; height: 20px; padding: 3px 4px 0; align-items: flex-start; }
.pact svg { width: 12px; height: 12px; }
.sec { margin: 0 4px 0 3px; border-top: 1px solid #c6c6c6; height: 41px; padding-top: 3px; }
.s2 { height: 56px; }
.s3 { height: 69px; }
.sec h3 { display: flex; align-items: center; justify-content: space-between; height: 13px; padding: 0 2px 0 1px; font-size: 8px; font-weight: 500; }
.chev { width: 10px; height: 6px; }
.frow { display: flex; gap: 6px; padding: 1px 8px 0 3px; }
.frow input { flex: 1; min-width: 0; height: 18px; border: 1px solid #b0b4c8; background: #fff; padding: 0 2px 3px; font: inherit; color: #222; }
.list { flex: 1; height: 41px; padding: 0 2px; background: #cfe3f8; border: 1px solid #66b2e2; }
.grip2 { display: flex; justify-content: center; padding-top: 1px; padding-left: 14px; }
.opt { display: flex; align-items: center; gap: 2px; height: 16px; padding-left: 23px; }
.opt input { appearance: none; width: 10px; height: 10px; margin: 0; border: 1px solid #888; border-radius: 2px; background: #fff; }
.opt input[type=radio] { border-radius: 50%; }
.opt input[type=checkbox]:checked { border-color: #0a5eb8; background: #0a5eb8; position: relative; }
.opt input[type=checkbox]:checked::after { content: ""; position: absolute; left: 2px; top: 1px; width: 4px; height: 3px; border: solid #fff; border-width: 0 0 1px 1px; transform: rotate(-45deg); }
.opt input[type=radio]:checked { border: 3px solid #0a5eb8; }
.opt.dis { color: #888; padding-top: 2px; height: 19px; }
.opt.dis input { border-color: #ccc; }
.splitter { width: 11px; display: flex; background: #f0f0f0; padding-top: 2px; }
.rail { width: 5px; display: flex; flex-direction: column; align-items: center; }
.rail span { width: 5px; background: #f8f8f8; border-right: 1px solid #bbb; height: 285px; border-bottom: 1px solid #bbb; }
.rail .knob { margin: 11px 0; }
.rail span:last-child { flex: 1; border-top: 1px solid #bbb; border-bottom: 0; }
.thumb { width: 3px; height: 417px; margin-top: 13px; background: #858585; border-radius: 1px; }

.viewport { flex: 1; min-width: 0; position: relative; overflow: hidden; background: #fff; padding: 4px 0 0 4px; }
.model { position: absolute; left: 287px; top: 30px; width: 215px; height: 495px; }
.lab { font-family: "Noto Sans CJK SC", sans-serif; font-weight: 700; }
.root { display: flex; align-items: center; height: 15px; color: #111; }
.root button { width: 8px; margin-right: 6px; }
.root button svg { width: 7px; height: 6px; }
.root span { padding-left: 2px; }
.tree { padding-left: 16px; }
.tree li { height: 15px; display: flex; align-items: center; padding-left: 13px; white-space: nowrap; color: #222; }
.tree li:nth-child(even), .tree li:nth-child(14n+5) { height: 16px; }
.tree .x { padding-left: 0; }
.tree .x::before { content: ""; margin: 0 6px 3px 3px; border: solid transparent; border-width: 3px 0 3px 4px; border-left-color: #111; }
.tree span { height: 16px; flex: none; display: flex; align-items: center; gap: 3px; border: 1px solid transparent; padding-right: 1px; }
.tree svg { width: 14px; height: 14px; }
.tree .sel span { background: #eaf4fb; border-color: #8fbcd8; }
.tree .off { color: #8d8d8d; --a: #d4d4d4; --b: #a6a6a6; --d: #999; }
.triad { position: absolute; left: 11px; bottom: 25px; width: 36px; height: 44px; }
.confirm { position: absolute; right: 22px; top: 8px; display: flex; gap: 12px; align-items: flex-start; }
.confirm svg { width: 22px; height: 18px; }
.confirm .no { margin-top: 22px; }
.confirm .no svg { width: 18px; height: 18px; }
.task { position: absolute; right: 0; top: 20px; width: 17px; border: 1px solid #999; border-right: 0; }
.task button { width: 16px; height: 17px; background: #d0d0d0; border-bottom: 1px solid #999; padding-bottom: 1px; }
.task button:nth-child(even) { height: 18px; }
.task .on { background: #fff; }
.task button:last-child { border: 0; }
.task svg { width: 14px; height: 14px; }
```
